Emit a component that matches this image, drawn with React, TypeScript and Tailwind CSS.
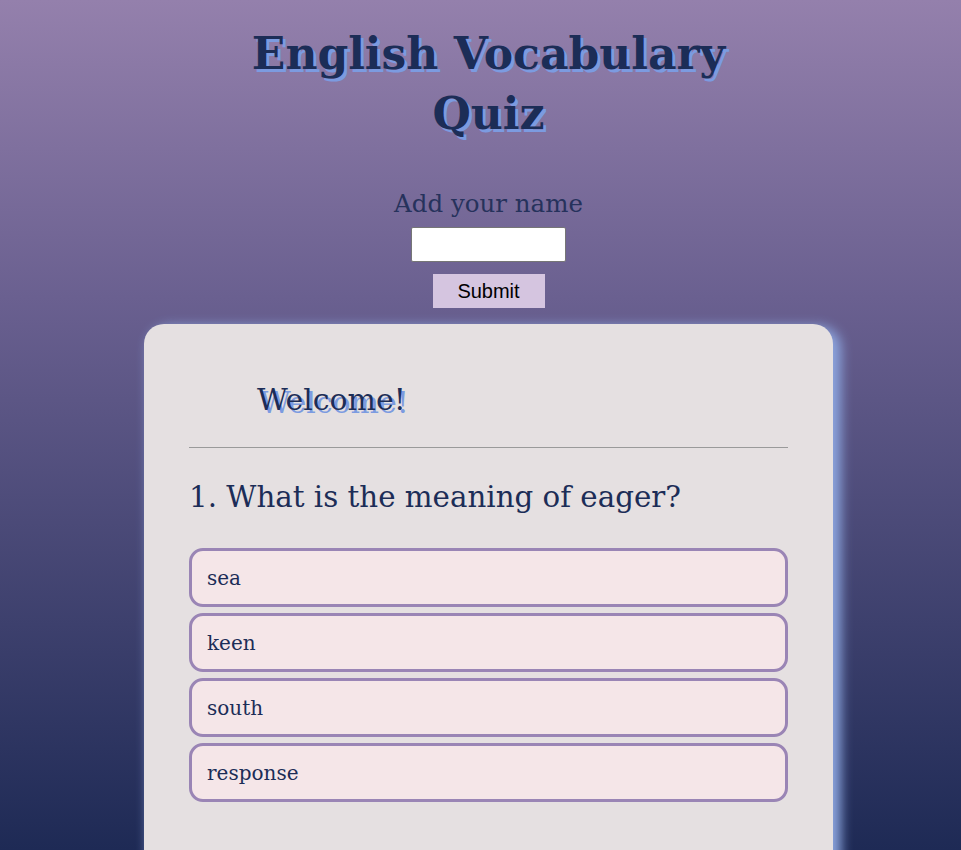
import React from "react";

const OPTIONS = ["sea", "keen", "south", "response"];

export default function App() {
  return (
    <div className="h-[850px] overflow-hidden pl-[16px] bg-[linear-gradient(to_bottom,#9480ac_0%,#6a6090_35%,#1e2a55_100%)] flex flex-col items-center font-['DejaVu_Serif',serif] [&>*]:shrink-0">
      <h1 className="mt-[24px] text-center text-[44px] leading-[60px] font-bold text-[#1c2d57] [text-shadow:3px_3px_0_#7c9be0] w-[520px]">
        English Vocabulary Quiz
      </h1>
      <p className="mt-[45px] text-[24.5px] leading-[30px] text-[#26325c]">Add your name</p>
      <input
        type="text"
        className="mt-[8px] w-[155px] h-[35px] bg-white border border-[#767676] rounded-[2px]"
      />
      <button className="mt-[12px] w-[112px] h-[34px] bg-[#d5c5e0] text-black text-[20px] font-['Liberation_Sans',sans-serif]">
        Submit
      </button>
      <div className="mt-[16px] w-[689px] rounded-[20px] bg-[#e5e0e1] shadow-[6px_4px_12px_2px_#8ca5de] px-[45px] pt-[56px] pb-[80px]">
        <h2 className="ml-[68px] text-[30px] leading-[40px] text-[#1c2d57] [text-shadow:3px_3px_0_#7c9be0]">
          Welcome!
        </h2>
        <hr className="mt-[27px] border-t border-[#9a9a9a]" />
        <h3 className="mt-[29px] text-[29.3px] leading-[40px] text-[#1c2d57]">
          1. What is the meaning of eager?
        </h3>
        <div className="mt-[31px] flex flex-col gap-[6px]">
          {OPTIONS.map((o) => (
            <div
              key={o}
              className="h-[59px] flex items-center px-[15px] rounded-[14px] border-[3px] border-[#9a85b5] bg-[#f5e6e8] text-[20px] text-[#1c2d57]"
            >
              {o}
            </div>
          ))}
        </div>
      </div>
    </div>
  );
}
